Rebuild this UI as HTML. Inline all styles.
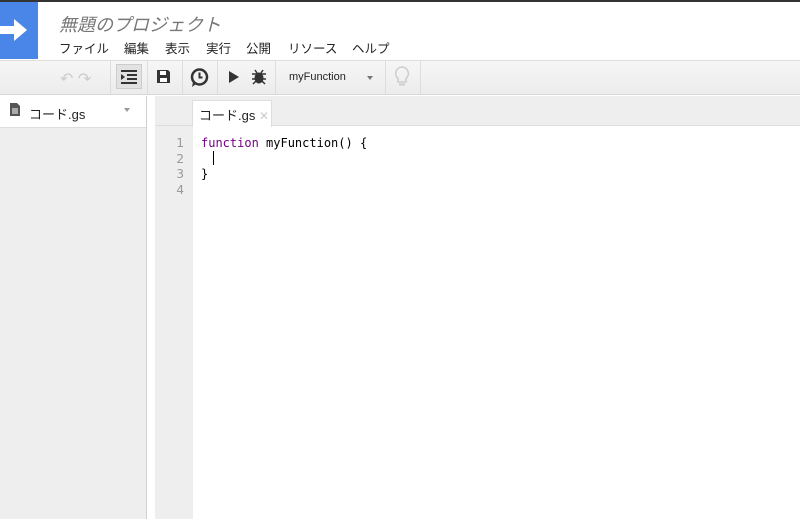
<!DOCTYPE html>
<html><head><meta charset="utf-8"><style>
*{margin:0;padding:0;box-sizing:border-box}
body{width:800px;height:519px;overflow:hidden;background:#fff;font-family:"Liberation Sans","Noto Sans CJK JP",sans-serif;position:relative}
.a{position:absolute}
.m{position:absolute;top:38px;font-size:12.5px;color:#222}
</style></head><body>
<div class="a" style="left:0;top:0;width:800px;height:2px;background:#333"></div>
<div class="a" style="left:0;top:2px;width:38px;height:57px;background:#4a86e8"></div>
<svg class="a" style="left:0;top:17px" width="30" height="26"><path d="M0 9h14V2l13 11-13 11v-7H0z" fill="#fff"/></svg>
<div class="a" style="left:59px;top:11px;font-size:18px;color:#777;font-style:italic">無題のプロジェクト</div>
<div class="m" style="left:59px">ファイル</div>
<div class="m" style="left:124px">編集</div>
<div class="m" style="left:165px">表示</div>
<div class="m" style="left:206px">実行</div>
<div class="m" style="left:246px">公開</div>
<div class="m" style="left:288px">リソース</div>
<div class="m" style="left:352px">ヘルプ</div>
<div class="a" style="left:0;top:60px;width:800px;height:35px;background:linear-gradient(#f6f6f6,#ececec);border-top:1px solid #ddd;border-bottom:1px solid #d8d8d8"></div>
<div class="a" style="left:110px;top:60px;width:1px;height:35px;background:#ddd"></div>
<div class="a" style="left:147px;top:60px;width:1px;height:35px;background:#ddd"></div>
<div class="a" style="left:182px;top:60px;width:1px;height:35px;background:#ddd"></div>
<div class="a" style="left:217px;top:60px;width:1px;height:35px;background:#ddd"></div>
<div class="a" style="left:275px;top:60px;width:1px;height:35px;background:#ddd"></div>
<div class="a" style="left:385px;top:60px;width:1px;height:35px;background:#ddd"></div>
<div class="a" style="left:420px;top:60px;width:1px;height:35px;background:#ddd"></div>
<div class="a" style="left:60px;top:69px;font-size:16px;color:#ccc">↶ ↷</div>
<div class="a" style="left:116px;top:64px;width:26px;height:25px;background:#e2e2e2;border:1px solid #ccc"></div>
<svg class="a" style="left:121px;top:70px" width="16" height="14"><g fill="#333"><rect x="0" y="0" width="16" height="2"/><rect x="6" y="4" width="10" height="2"/><rect x="6" y="8" width="10" height="2"/><rect x="0" y="12" width="16" height="2"/><path d="M0 4l4 3-4 3z"/></g></svg>
<svg class="a" style="left:157px;top:70px" width="13" height="13"><path d="M0 0h11l2 2v11H0z" fill="#333"/><rect x="3" y="1" width="6" height="4" fill="#fff"/><rect x="3" y="8" width="7" height="4" fill="#fff"/></svg>
<svg class="a" style="left:190px;top:68px" width="19" height="19"><circle cx="9.5" cy="9" r="7.5" fill="none" stroke="#333" stroke-width="2.5"/><path d="M9.5 4.5v5h3" fill="none" stroke="#333" stroke-width="2"/><path d="M3 14l-1 5 4-3z" fill="#333"/></svg>
<svg class="a" style="left:229px;top:71px" width="10" height="12"><path d="M0 0l10 6-10 6z" fill="#333"/></svg>
<svg class="a" style="left:251px;top:68px" width="16" height="17"><g stroke="#333" stroke-width="1.5"><path d="M1 6h14M1 11h14M2 16l3-3M14 16l-3-3M4 2l2 3M12 2l-2 3"/></g><ellipse cx="8" cy="10" rx="4.5" ry="5.5" fill="#333"/></svg>
<div class="a" style="left:289px;top:71px;font-size:11px;color:#222">myFunction</div>
<div class="a" style="left:367px;top:76px;border:3px solid transparent;border-top:4px solid #777"></div>
<svg class="a" style="left:394px;top:66px" width="16" height="22"><path d="M8 1a6.5 6.5 0 0 0-4 11.5V16h8v-3.5A6.5 6.5 0 0 0 8 1z" fill="none" stroke="#ccc" stroke-width="1.5"/><rect x="5" y="17.5" width="6" height="2" fill="#ccc"/></svg>
<div class="a" style="left:0;top:96px;width:146px;height:423px;background:#eeeeee"></div>
<div class="a" style="left:0;top:96px;width:146px;height:32px;background:#fff;border-bottom:1px solid #ddd"></div>
<div class="a" style="left:146px;top:96px;width:1px;height:423px;background:#d0d0d0"></div>
<svg class="a" style="left:10px;top:103px" width="10" height="13"><path d="M0 0h7l3 3v10H0z" fill="#555"/><g stroke="#fff"><path d="M2 6h6M2 8h6M2 10h6"/></g></svg>
<div class="a" style="left:29px;top:104px;font-size:13px;color:#222">コード.gs</div>
<div class="a" style="left:124px;top:108px;border:3.5px solid transparent;border-top:4px solid #999"></div>
<div class="a" style="left:155px;top:96px;width:645px;height:30px;background:#eeeeee;border-bottom:1px solid #ddd"></div>
<div class="a" style="left:155px;top:126px;width:38px;height:393px;background:#eeeeee"></div>
<div class="a" style="left:192px;top:100px;width:80px;height:27px;background:#fff;border:1px solid #ddd;border-bottom:none"></div>
<div class="a" style="left:199px;top:105px;font-size:13px;color:#222">コード.gs <span style="color:#ccc;font-size:12px">✕</span></div>
<div class="a" style="left:160px;top:136px;width:24px;text-align:right;font-family:'DejaVu Sans',sans-serif;font-size:12px;line-height:15.5px;color:#999">1<br>2<br>3<br>4</div>
<div class="a" style="left:201px;top:136px;font-family:'DejaVu Sans Mono',monospace;font-size:12px;line-height:15.5px;color:#000;white-space:pre"><span style="color:#708">function</span> myFunction() {

}</div>
<div class="a" style="left:213px;top:151px;width:1px;height:14px;background:#000"></div>
</body></html>
